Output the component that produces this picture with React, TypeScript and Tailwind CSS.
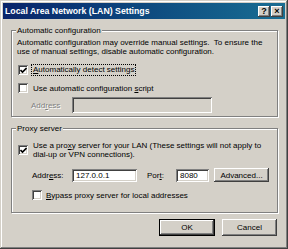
import type { ReactNode } from 'react'

const raised =
  'shadow-[inset_-1px_-1px_#404040,inset_1px_1px_#ffffff,inset_-2px_-2px_#808080,inset_2px_2px_#d4d0c8]'
const sunken =
  'shadow-[inset_1px_1px_#808080,inset_-1px_-1px_#ffffff,inset_2px_2px_#404040,inset_-2px_-2px_#d4d0c8]'

function TitleBtn({ children }: { children: ReactNode }) {
  return (
    <span
      className={`w-[12px] h-[11px] bg-[#d4d0c8] ${raised} flex items-center justify-center text-[9px] leading-none font-bold text-black`}
    >
      {children}
    </span>
  )
}

function Check({ checked }: { checked?: boolean }) {
  return (
    <span className={`w-[10px] h-[10px] shrink-0 bg-white ${sunken} flex items-center justify-center`}>
      {checked && (
        <svg width="7" height="7" viewBox="0 0 7 7">
          <path d="M0.5 3 L2.5 5 L6.5 1" stroke="#000" strokeWidth="1.6" fill="none" />
        </svg>
      )}
    </span>
  )
}

function Field({ value, className, disabled }: { value?: string; className: string; disabled?: boolean }) {
  return (
    <span
      className={`${className} ${disabled ? 'bg-[#d4d0c8]' : 'bg-white'} ${sunken} flex items-center pl-[4px]`}
    >
      {value}
    </span>
  )
}

function Button({ children, className }: { children: ReactNode; className: string }) {
  return (
    <span className={`${className} bg-[#d4d0c8] ${raised} flex items-center justify-center`}>{children}</span>
  )
}

export default function App() {
  return (
    <div
      className={`w-[288px] h-[249px] bg-[#d4d0c8] p-[3px] flex flex-col font-['Liberation_Sans',Arial,sans-serif] text-[8px] leading-[9px] text-black shadow-[inset_-1px_-1px_#404040,inset_1px_1px_#d4d0c8,inset_-2px_-2px_#808080,inset_2px_2px_#ffffff]`}
    >
      {/* Title bar */}
      <div className="h-[16px] flex items-center gap-[1px] pl-[2px] pr-[2px] bg-linear-to-r from-[#0a246a] to-[#1a6e93]">
        <span className="flex-1 text-white font-bold text-[8.75px]">Local Area Network (LAN) Settings</span>
        <TitleBtn>?</TitleBtn>
        <TitleBtn>×</TitleBtn>
      </div>

      <div className="flex flex-col pl-[8px] pr-[7px]">
        {/* Automatic configuration */}
        <fieldset className="mt-[7px] border border-[#808080] shadow-[1px_1px_0_#ffffff,inset_1px_1px_0_#ffffff] pl-[5px] pb-[3px]">
          <legend className="px-[1px] -ml-[1px] bg-[#d4d0c8]">Automatic configuration</legend>
          <p className="mt-[3px]">
            Automatic configuration may override manual settings.{'\u00a0 '}To ensure the
            <br />
            use of manual settings, disable automatic configuration.
          </p>
          <div className="mt-[8px] h-[12px] flex items-center ml-[1px]">
            <Check checked />
            <span className="ml-[3px] px-[1px] border border-dotted border-black leading-[10px]">
              <u>A</u>utomatically detect settings
            </span>
          </div>
          <div className="mt-[6px] h-[12px] flex items-center ml-[1px]">
            <Check />
            <span className="ml-[4px] px-[1px]">
              Use automatic configuration <u>s</u>cript
            </span>
          </div>
          <div className="mt-[3px] flex items-center ml-[14px]">
            <span className="w-[41px] text-[#808080] [text-shadow:1px_1px_0_#ffffff]">
              Add<u>r</u>ess
            </span>
            <Field disabled className="w-[140px] h-[16px]" />
          </div>
        </fieldset>

        {/* Proxy server */}
        <fieldset className="mt-[7px] border border-[#808080] shadow-[1px_1px_0_#ffffff,inset_1px_1px_0_#ffffff] pl-[5px] pb-[11px]">
          <legend className="px-[1px] -ml-[1px] bg-[#d4d0c8]">Proxy server</legend>
          <div className="mt-[8px] flex items-center ml-[1px]">
            <Check checked />
            <span className="ml-[4px] px-[1px]">
              Use a pro<u>x</u>y server for your LAN (These settings will not apply to
              <br />
              dial-up or VPN connections).
            </span>
          </div>
          <div className="mt-[9px] h-[14px] flex items-center ml-[15px]">
            <span className="w-[40px]">
              Addr<u>e</u>ss:
            </span>
            <Field value="127.0.0.1" className="w-[65px] h-[13px]" />
            <span className="ml-[10px] w-[29px]">
              Por<u>t</u>:
            </span>
            <Field value="8080" className="w-[33px] h-[13px]" />
            <Button className="ml-[5px] w-[55px] h-[14px]">Advanced...</Button>
          </div>
          <div className="mt-[7px] h-[12px] flex items-center ml-[15px]">
            <Check />
            <span className="ml-[3px] px-[1px]">
              <u>B</u>ypass proxy server for local addresses
            </span>
          </div>
        </fieldset>

        {/* Dialog buttons */}
        <div className="mt-[6px] flex justify-end gap-[7px] pr-[1px]">
          <span className="w-[56px] h-[17px] border border-black flex">
            <Button className="flex-1">OK</Button>
          </span>
          <Button className="w-[55px] h-[17px]">Cancel</Button>
        </div>
      </div>
    </div>
  )
}
